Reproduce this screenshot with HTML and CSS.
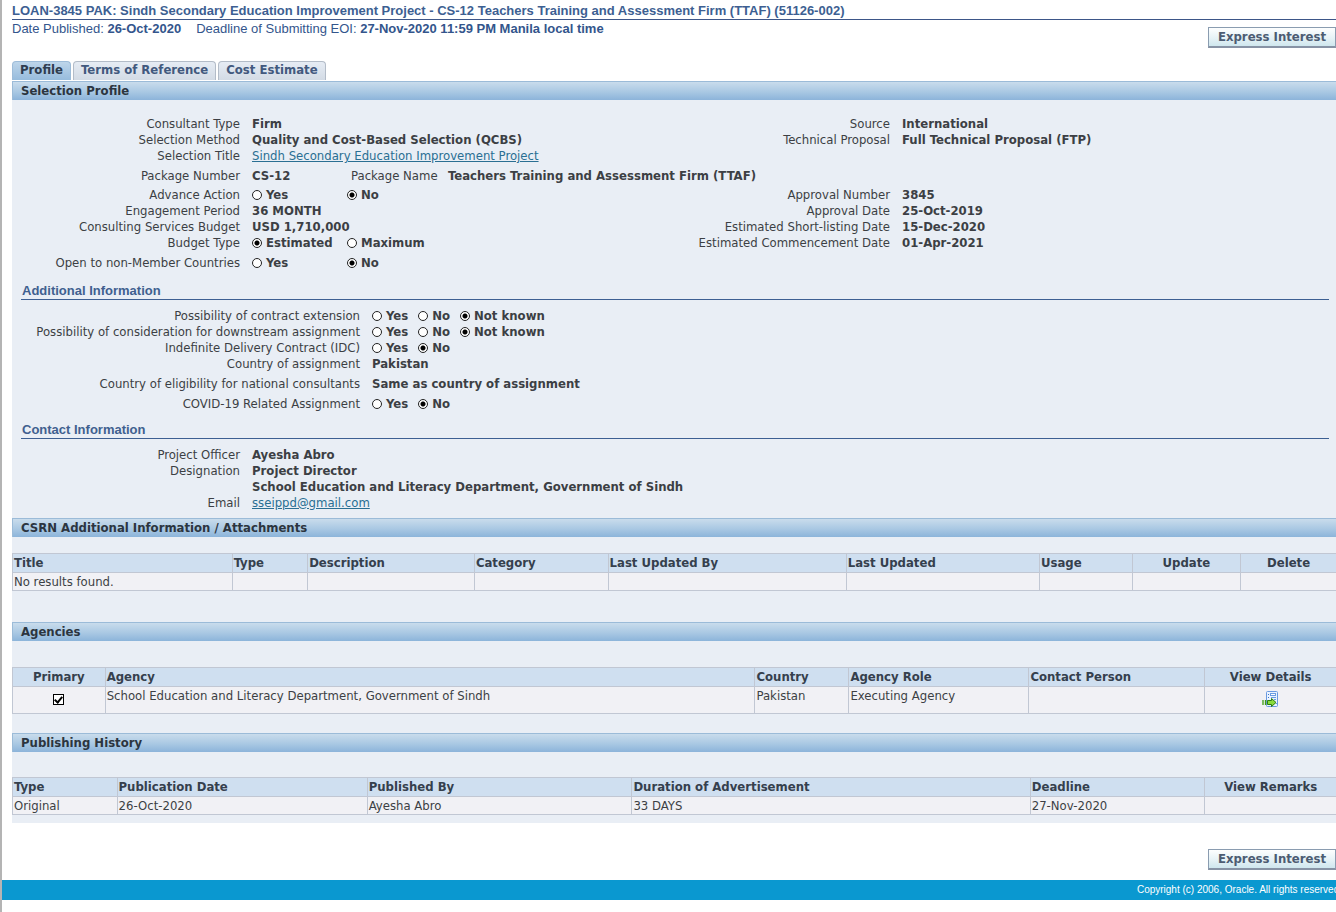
FILE: index.html
```
<!DOCTYPE html>
<html lang="en">
<head>
<meta charset="utf-8">
<title>Consulting Services Recruitment Notice</title>
<link rel="stylesheet" href="styles.css">
</head>
<body>
<div class="page">
  <header class="head">
    <h1 class="title">LOAN-3845 PAK: Sindh Secondary Education Improvement Project - CS-12 Teachers Training and Assessment Firm (TTAF) (51126-002)</h1>
    <div class="head-row">
      <p class="dates"><span>Date Published: <b>26-Oct-2020</b></span><span>Deadline of Submitting EOI: <b>27-Nov-2020 11:59 PM Manila local time</b></span></p>
      <button class="btn" type="button">Express Interest</button>
    </div>
  </header>
  <main class="main">
    <nav class="tabs">
      <a class="tab tab-active" href="#profile">Profile</a>
      <a class="tab" href="#terms">Terms of Reference</a>
      <a class="tab" href="#cost">Cost Estimate</a>
    </nav>
    <div class="panel">
      <h2 class="bar">Selection Profile</h2>
      <section class="profile">
        <div class="pair">
          <dl class="fields">
            <dt>Consultant Type</dt><dd>Firm</dd>
            <dt>Selection Method</dt><dd>Quality and Cost-Based Selection (QCBS)</dd>
            <dt>Selection Title</dt><dd><a class="link" href="#project">Sindh Secondary Education Improvement Project</a></dd>
          </dl>
          <dl class="fields fields-right">
            <dt>Source</dt><dd>International</dd>
            <dt>Technical Proposal</dt><dd>Full Technical Proposal (FTP)</dd>
          </dl>
        </div>
        <dl class="fields fields-package">
          <dt>Package Number</dt><dd>CS-12</dd>
          <dt>Package Name</dt><dd>Teachers Training and Assessment Firm (TTAF)</dd>
        </dl>
        <div class="pair">
          <dl class="fields">
            <dt id="l-adv">Advance Action</dt>
            <dd class="options options-wide" role="radiogroup" aria-labelledby="l-adv">
              <label><input type="radio" name="adv">Yes</label>
              <label><input type="radio" name="adv" checked>No</label>
            </dd>
            <dt>Engagement Period</dt><dd>36 MONTH</dd>
            <dt>Consulting Services Budget</dt><dd>USD 1,710,000</dd>
            <dt id="l-bud">Budget Type</dt>
            <dd class="options options-wide" role="radiogroup" aria-labelledby="l-bud">
              <label><input type="radio" name="bud" checked>Estimated</label>
              <label><input type="radio" name="bud">Maximum</label>
            </dd>
            <dt id="l-open" class="spaced">Open to non-Member Countries</dt>
            <dd class="options options-wide spaced" role="radiogroup" aria-labelledby="l-open">
              <label><input type="radio" name="open">Yes</label>
              <label><input type="radio" name="open" checked>No</label>
            </dd>
          </dl>
          <dl class="fields fields-right">
            <dt>Approval Number</dt><dd>3845</dd>
            <dt>Approval Date</dt><dd>25-Oct-2019</dd>
            <dt>Estimated Short-listing Date</dt><dd>15-Dec-2020</dd>
            <dt>Estimated Commencement Date</dt><dd>01-Apr-2021</dd>
          </dl>
        </div>
      </section>
      <section class="sub">
        <h3 class="subhead">Additional Information</h3>
        <dl class="fields fields-wide">
          <dt id="l-ext">Possibility of contract extension</dt>
          <dd class="options" role="radiogroup" aria-labelledby="l-ext">
            <label><input type="radio" name="ext">Yes</label>
            <label><input type="radio" name="ext">No</label>
            <label><input type="radio" name="ext" checked>Not known</label>
          </dd>
          <dt id="l-down">Possibility of consideration for downstream assignment</dt>
          <dd class="options" role="radiogroup" aria-labelledby="l-down">
            <label><input type="radio" name="down">Yes</label>
            <label><input type="radio" name="down">No</label>
            <label><input type="radio" name="down" checked>Not known</label>
          </dd>
          <dt id="l-idc">Indefinite Delivery Contract (IDC)</dt>
          <dd class="options" role="radiogroup" aria-labelledby="l-idc">
            <label><input type="radio" name="idc">Yes</label>
            <label><input type="radio" name="idc" checked>No</label>
          </dd>
          <dt>Country of assignment</dt><dd>Pakistan</dd>
          <dt class="spaced">Country of eligibility for national consultants</dt><dd class="spaced">Same as country of assignment</dd>
          <dt id="l-cov" class="spaced">COVID-19 Related Assignment</dt>
          <dd class="options spaced" role="radiogroup" aria-labelledby="l-cov">
            <label><input type="radio" name="cov">Yes</label>
            <label><input type="radio" name="cov" checked>No</label>
          </dd>
        </dl>
      </section>
      <section class="sub">
        <h3 class="subhead">Contact Information</h3>
        <dl class="fields">
          <dt>Project Officer</dt><dd>Ayesha Abro</dd>
          <dt>Designation</dt><dd>Project Director<br>School Education and Literacy Department, Government of Sindh</dd>
          <dt>Email</dt><dd><a class="link" href="mailto:sseippd@gmail.com">sseippd@gmail.com</a></dd>
        </dl>
      </section>

      <h2 class="bar">CSRN Additional Information / Attachments</h2>
      <table class="grid grid-attachments">
        <colgroup><col class="a1"><col class="a2"><col class="a3"><col class="a4"><col class="a5"><col class="a6"><col class="a7"><col class="a8"><col></colgroup>
        <thead><tr><th>Title</th><th>Type</th><th>Description</th><th>Category</th><th>Last Updated By</th><th>Last Updated</th><th>Usage</th><th class="mid">Update</th><th class="mid">Delete</th></tr></thead>
        <tbody><tr><td>No results found.</td><td></td><td></td><td></td><td></td><td></td><td></td><td></td><td></td></tr></tbody>
      </table>

      <h2 class="bar">Agencies</h2>
      <table class="grid grid-agencies">
        <colgroup><col class="b1"><col class="b2"><col class="b3"><col class="b4"><col class="b5"><col></colgroup>
        <thead><tr><th class="mid">Primary</th><th>Agency</th><th>Country</th><th>Agency Role</th><th>Contact Person</th><th class="mid">View Details</th></tr></thead>
        <tbody><tr>
          <td class="mid"><input class="check" type="checkbox" aria-label="Primary" checked></td>
          <td>School Education and Literacy Department, Government of Sindh</td><td>Pakistan</td><td>Executing Agency</td><td></td>
          <td class="mid"><a class="details" href="#details" aria-label="View Details">
            <svg width="17" height="17" viewBox="0 0 17 17" aria-hidden="true">
              <rect x="4.500" y="0.500" width="11" height="15" rx="1" fill="#eaf3ff" stroke="#6a9ae0"/>
              <path d="M6 3.500h1M6 6.500h1" stroke="#3c74cc"/>
              <rect x="8.500" y="2.500" width="5" height="2" fill="#fff" stroke="#6c9de2"/>
              <path d="M9 6.500h5M12 8.500h2M14 12.500h1" stroke="#6c9de2"/>
              <path d="M1 9v5M3.500 9v5" stroke="#3f9e12" stroke-width="1.300"/>
              <path d="M5.500 9.500h4v-2l4.500 4-4.500 4v-2h-4z" fill="#8bdc3c" stroke="#2c7d10"/>
            </svg></a></td>
        </tr></tbody>
      </table>

      <h2 class="bar">Publishing History</h2>
      <table class="grid grid-history">
        <colgroup><col class="c1"><col class="c2"><col class="c3"><col class="c4"><col class="c5"><col></colgroup>
        <thead><tr><th>Type</th><th>Publication Date</th><th>Published By</th><th>Duration of Advertisement</th><th>Deadline</th><th class="mid">View Remarks</th></tr></thead>
        <tbody><tr><td>Original</td><td>26-Oct-2020</td><td>Ayesha Abro</td><td>33 DAYS</td><td>27-Nov-2020</td><td></td></tr></tbody>
      </table>
    </div>
    <div class="actions"><button class="btn" type="button">Express Interest</button></div>
  </main>
  <footer class="foot"><span>Copyright (c) 2006, Oracle. All rights reserved.</span></footer>
</div>
</body>
</html>
```
FILE: styles.css
```
* { box-sizing: border-box; }
body {
  margin: 0;
  background: #fff;
  color: #3c3f44;
  font: 13px/16px "DejaVu Sans Condensed", Tahoma, sans-serif;
}
h1, h2, h3, p, dl, dd { margin: 0; }
.page {
  min-height: 100vh;
  border-left: 2px solid #b4b4b4;
  overflow: hidden;
}
.head, .main { padding-left: 10px; }
.head { font-family: "Liberation Sans", Arial, sans-serif; color: #33558c; }
.title {
  padding-top: 3px;
  height: 20px;
  border-bottom: 1px solid #3d5688;
  font-size: 13px;
  line-height: 16px;
  white-space: nowrap;
  color: #3d5f92;
}
.head-row { display: flex; justify-content: space-between; align-items: flex-start; }
.head-row .btn { margin-top: 7px; }
.dates { display: flex; gap: 15px; padding-top: 1px; font-size: 13px; }
.btn {
  min-width: 128px;
  height: 21px;
  padding: 0;
  border: 1px solid #8a9cb0;
  border-bottom: 2px solid #8793a5;
  background: linear-gradient(#fdfefe, #e6f2f6 55%, #cfe7ee);
  color: #4c5c72;
  font: bold 13px/16px "DejaVu Sans Condensed", Tahoma, sans-serif;
}
.tabs { display: flex; gap: 2px; padding-top: 13px; }
.tab {
  height: 19px;
  padding: 0 7px;
  border: 1px solid #b3bcc8;
  border-bottom: 0;
  border-radius: 4px 4px 0 0;
  background: linear-gradient(#e6ecf4, #d3dbe5);
  color: #42597e;
  font-weight: bold;
  text-decoration: none;
}
.tab-active {
  border-color: #9dbcd9;
  background: linear-gradient(#bdd5ea, #97bcdd);
  color: #2f3d50;
}
.panel { margin-top: 1px; padding-bottom: 8px; background: #e9eef5; }
.bar {
  height: 19px;
  padding: 0 8px;
  border-top: 1px solid #9bbbd8;
  border-left: 1px solid #9bbbd8;
  background: linear-gradient(#c9dcec, #a9c8e3 55%, #8cb4da);
  color: #2c353f;
  font-size: 13px;
  line-height: 18px;
}
.profile { padding: 16px 0 0; }
.pair { display: grid; grid-template-columns: 1fr 1fr; align-items: start; }
.fields { display: grid; grid-template-columns: 228px 1fr; column-gap: 12px; }
.fields-right { grid-template-columns: 216px 1fr; }
.fields-wide { grid-template-columns: 348px 1fr; }
.fields-package {
  grid-template-columns: 228px 87px 85px 1fr;
  margin: 4px 0 3px;
}
.fields dt { text-align: right; white-space: nowrap; }
.fields dd { font-weight: bold; white-space: nowrap; }
.fields .spaced { margin-top: 4px; }
.link { color: #2a6f93; font-weight: normal; }
.options { display: flex; gap: 10px; }
.options label { display: flex; align-items: center; gap: 4px; }
.options-wide { gap: 0; }
.options-wide label { width: 95px; }
input[type="radio"] {
  appearance: none;
  width: 10px;
  height: 10px;
  margin: 0;
  border: 1px solid #222;
  border-radius: 50%;
  background: #fff;
}
input[type="radio"]:checked { background: radial-gradient(circle, #000 2px, #fff 3px); }
.sub { padding-top: 12px; }
.sub + .bar { margin-top: 7px; }
.subhead {
  margin: 0 7px 8px 9px;
  padding-left: 1px;
  border-bottom: 1px solid #3d5f92;
  color: #40608f;
  font: bold 13px/16px "Liberation Sans", Arial, sans-serif;
}
.sub + .sub { padding-top: 10px; }
.grid { width: 100%; table-layout: fixed; border-collapse: collapse; }
.grid th, .grid td {
  height: 19px;
  padding: 1px;
  border: 1px solid #c1c7d3;
  border-right: 0;
  overflow: hidden;
  text-align: left;
  vertical-align: top;
  white-space: nowrap;
}
.grid th { background: #cfdff0; color: #35404d; }
.grid td { padding-bottom: 0; height: 18px; background: #f1f1f5; }
.grid .mid { text-align: center; }
.grid-attachments { margin: 16px 0 31px; }
.grid-agencies { margin: 26px 0 19px; }
.grid-agencies td { height: 27px; }
.grid-agencies td.mid { padding-top: 4px; }
.grid-history { margin-top: 25px; }
.a1 { width: 16.6%; } .a2 { width: 5.7%; } .a3 { width: 12.6%; } .a4 { width: 10.1%; }
.a5 { width: 18%; } .a6 { width: 14.6%; } .a7 { width: 7%; } .a8 { width: 8.2%; }
.b1 { width: 7%; } .b2 { width: 49.1%; } .b3 { width: 7.1%; } .b4 { width: 13.6%; } .b5 { width: 13.3%; }
.c1 { width: 7.9%; } .c2 { width: 18.9%; } .c3 { width: 20%; } .c4 { width: 30.1%; } .c5 { width: 13.2%; }
.check {
  appearance: none;
  display: inline-block;
  width: 11px;
  height: 11px;
  margin: 3px 0 0;
  border: 1px solid #000;
  background: #fff;
}
.check:checked::before {
  content: "";
  display: block;
  width: 3px;
  height: 6px;
  margin: 0 auto;
  border: solid #000;
  border-width: 0 2px 2px 0;
  transform: rotate(40deg);
}
.details { display: inline-block; height: 17px; }
.details svg { display: block; }
.actions { display: flex; justify-content: flex-end; padding: 26px 0 10px; }
.foot {
  display: flex;
  justify-content: flex-end;
  height: 20px;
  background: #0a98d0;
  color: #fff;
  font: 10px/20px "Liberation Sans", Arial, sans-serif;
}
.foot span { margin-right: -6px; white-space: nowrap; }
```
